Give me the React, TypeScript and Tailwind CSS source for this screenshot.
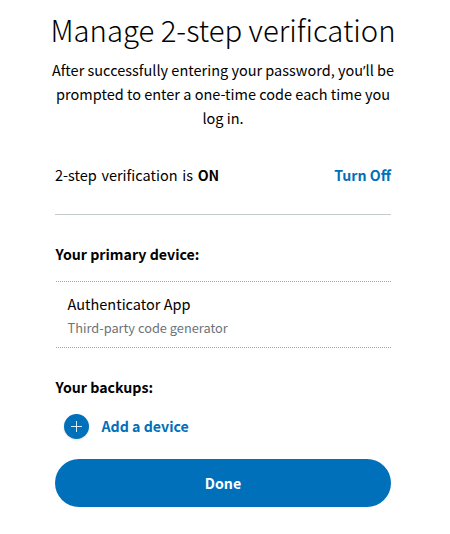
type Device = {
    name: string
    description: string
}

type AddDeviceButtonProps = {
    label: string
}

const primaryDevice: Device = {
    name: 'Authenticator App',
    description: 'Third-party code generator',
}

function PlusIcon() {
    return (
        <svg width="11" height="11" viewBox="0 0 11 11" fill="none" stroke="white" strokeWidth="1">
            <path d="M0 5.5h11M5.5 0v11" opacity="0.85" />
        </svg>
    )
}

function DeviceCard({ device }: { device: Device }) {
    return (
        <div className="mt-[15px] ml-px h-[67px] border-y border-dotted border-[#9da3a6] pt-2.5 pl-[11.5px]">
            <div className="leading-6">{device.name}</div>
            <div className="text-[12.8px] leading-6 text-[#6c7378]">{device.description}</div>
        </div>
    )
}

function AddDeviceButton(props: AddDeviceButtonProps) {
    return (
        <button className="mt-[15px] ml-[9px] flex h-[25px] items-center gap-[12.5px] text-[14.2px] font-bold text-[#0070ba]">
            <span className="flex size-[25px] items-center justify-center rounded-full bg-[#0070ba] shadow">
                <PlusIcon />
            </span>
            {props.label}
        </button>
    )
}

export default function App() {
    return (
        <div className="h-[534px] w-[450px] bg-white pt-[9px] pl-[55px] font-['Noto_Sans_CJK_SC','Noto_Sans',sans-serif] text-[14.5px] text-black">
            <div className="flex w-[336px] flex-col">
                <h1 className="-mx-5 text-center text-[29.3px] leading-10 font-light whitespace-nowrap">
                    Manage 2-step verification
                </h1>
                <p className="-mx-5 mt-[9px] text-center leading-6">
                    After successfully entering your password, you
                    <span className="font-['Open_Sans'] leading-none">’</span>ll be
                    <br />
                    prompted to enter a one-time code each time you
                    <br />
                    log in.
                </p>
                <div className="mt-[33px] flex justify-between border-b border-[#c6cccc] pb-[27px] leading-6">
                    <span className="[word-spacing:1.4px]">
                        2-step verification is <b className="text-[14.2px] leading-none">ON</b>
                    </span>
                    <button className="text-[14.2px] font-bold text-[#0070ba]">Turn Off</button>
                </div>
                <h2 className="mt-[27px] pl-[0.5px] text-[14.2px] leading-6 font-bold">Your primary device:</h2>
                <DeviceCard device={primaryDevice} />
                <h2 className="mt-[27px] pl-[0.5px] text-[14.2px] leading-6 font-bold">Your backups:</h2>
                <AddDeviceButton label="Add a device" />
                <button className="mt-5 h-12 w-full rounded-full bg-[#0070ba] pt-px text-[14.2px] font-bold text-white">
                    Done
                </button>
            </div>
        </div>
    )
}
